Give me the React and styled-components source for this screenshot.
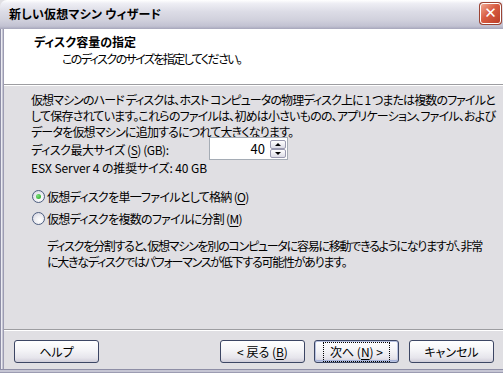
import React from 'react';
import styled, { createGlobalStyle } from 'styled-components';

const GlobalStyle = createGlobalStyle`
  * {
    box-sizing: border-box;
  }
  html, body {
    margin: 0;
    padding: 0;
    background: #e0dfe3;
  }
  body {
    font-family: "Noto Sans CJK JP", "Liberation Sans", sans-serif;
    font-size: 12px;
    color: #000;
    font-feature-settings: "palt";
  }
`;

const Window = styled.div`
  width: 503px;
  height: 373px;
  display: flex;
  flex-direction: column;
  background: #e0dfe3;
  overflow: hidden;
`;

/////////////////// TITLE BAR ///////////////////
const TitleBar = styled.div`
  height: 29px;
  flex-shrink: 0;
  display: flex;
  align-items: center;
  padding: 0 2px 0 9px;
  border-top-left-radius: 7px;
  background: linear-gradient(
    to bottom,
    #ffffff 0%,
    #eeeef4 12%,
    #dcdce6 40%,
    #d0d0dc 70%,
    #c2c2d2 90%,
    #a6a6bb 100%
  );
`;

const Title = styled.div`
  font-weight: bold;
  font-size: 12px;
  line-height: 16px;
  margin-top: -1px;
  letter-spacing: 0.2px;
  white-space: nowrap;
`;

const CloseButton = styled.div`
  margin-left: auto;
  margin-top: -2px;
  width: 21px;
  height: 21px;
  flex-shrink: 0;
  border: 1px solid #ffffff;
  border-radius: 3px;
  background: #d04e34;
  background-image: linear-gradient(135deg, #f0a892 0%, #d85c42 45%, #bc3e28 100%);
  box-shadow: 0 0 0 1px #9c4434;
  display: flex;
  align-items: center;
  justify-content: center;
  color: #ffffff;
  font-family: "DejaVu Sans", sans-serif;
  font-size: 15px;
  font-weight: bold;
  line-height: 1;
`;

/////////////////// FRAME ///////////////////
const Middle = styled.div`
  flex: 1;
  display: flex;
  min-height: 0;
  min-width: 0;
`;

const FrameEdge = styled.div`
  width: 4px;
  flex-shrink: 0;
  background: linear-gradient(
    to right,
    #8e8ea6 0px,
    #8e8ea6 1px,
    #ececf2 1px,
    #ececf2 2px,
    #c6c6d4 2px,
    #c6c6d4 3px,
    #9c9cb2 3px
  );
`;

const Content = styled.div`
  flex: 1;
  min-width: 0;
  display: flex;
  flex-direction: column;
  overflow: hidden;
`;

const BottomFrame = styled.div`
  height: 4px;
  flex-shrink: 0;
  background: linear-gradient(
    to bottom,
    #8e8ea6 0px,
    #8e8ea6 1px,
    #c6c6d4 1px,
    #c6c6d4 3px,
    #9c9cb2 3px
  );
`;

/////////////////// HEADER ///////////////////
const Header = styled.div`
  height: 56px;
  flex-shrink: 0;
  background: #ffffff;
  border-bottom: 1px solid #9d9da1;
  box-shadow: 0 1px 0 #ffffff;
  padding: 5px 0 0 30px;
`;

const HeaderTitle = styled.div`
  font-weight: bold;
  line-height: 16px;
`;

const HeaderSub = styled.div`
  line-height: 16px;
  margin: 1px 0 0 28px;
  letter-spacing: -1.6px;
`;

/////////////////// BODY ///////////////////
const Body = styled.div`
  flex: 1;
  padding: 6px 0 0 27px;
  margin-top: 1px;
  display: flex;
  flex-direction: column;
`;

const Para = styled.div`
  line-height: 16px;
  white-space: nowrap;
  letter-spacing: ${p => p.tight || -0.8}px;
  padding-left: ${p => p.indent || 0}px;
  margin-top: ${p => p.top || 0}px;
`;

const SizeRow = styled.div`
  display: flex;
  align-items: center;
  height: 23px;
  margin-top: -3px;
`;

const SizeLabel = styled.div`
  width: 178px;
  padding-top: 2px;
  letter-spacing: -0.45px;
`;

const SpinBox = styled.div`
  width: 79px;
  height: 23px;
  border: 1px solid #a5acb5;
  background: #ffffff;
  display: flex;
  align-items: center;
  justify-content: flex-end;
  padding-right: 1px;
`;

const SpinValue = styled.div`
  font-size: 13px;
  margin-right: 5px;
  color: #000;
`;

const SpinButtons = styled.div`
  display: flex;
  flex-direction: column;
`;

const SpinButton = styled.div`
  width: 16px;
  height: 9px;
  border: 1px solid #9a9ab0;
  border-radius: 2px;
  background: linear-gradient(to bottom, #ffffff, #dcdce6);
  display: flex;
  align-items: center;
  justify-content: center;
`;

const Arrow = styled.div`
  width: 0;
  height: 0;
  border-left: 3px solid transparent;
  border-right: 3px solid transparent;
  ${p => (p.up ? 'border-bottom: 3px solid #000;' : 'border-top: 3px solid #000;')}
`;

const RadioRow = styled.div`
  display: flex;
  align-items: center;
  height: 22px;
  padding-left: 1px;
  white-space: nowrap;
  letter-spacing: -0.7px;
  margin-top: ${p => p.top || 0}px;
`;

const RadioCircle = styled.div`
  width: 13px;
  height: 13px;
  flex-shrink: 0;
  border-radius: 50%;
  border: 1px solid #4d5e80;
  background: radial-gradient(circle at 60% 65%, #ffffff 0%, #f0f0f4 40%, #cfcfdc 100%);
  display: flex;
  align-items: center;
  justify-content: center;
  margin-right: 2px;
`;

const RadioDot = styled.div`
  width: 5px;
  height: 5px;
  border-radius: 50%;
  background: radial-gradient(circle at 35% 35%, #7be07b, #21a121);
`;

const U = styled.span`
  text-decoration: underline;
  text-underline-offset: 2px;
`;

/////////////////// FOOTER ///////////////////
const Footer = styled.div`
  flex-shrink: 0;
  border-top: 1px solid #9d9da1;
  box-shadow: inset 0 1px 0 #ffffff;
  padding: 10px 9px 6px 10px;
  display: flex;
  align-items: center;
`;

const Spacer = styled.div`
  flex: 1;
`;

const Button = styled.div`
  width: 85px;
  height: 23px;
  flex-shrink: 0;
  margin-left: ${p => p.gap || 0}px;
  border: 1px solid #3c4664;
  border-radius: 3px;
  background: linear-gradient(to bottom, #ffffff 0%, #f4f4f7 45%, #e6e5ec 80%, #cfcdd9 100%);
  box-shadow: ${p => (p.primary ? 'inset 0 0 0 1px #b8c2e0, inset 0 -1px 0 1px #a8b4dc' : 'none')};
  display: flex;
  align-items: center;
  justify-content: center;
  line-height: 14px;
  white-space: nowrap;
`;

const FocusLabel = styled.span`
  outline: 1px dotted #000;
  outline-offset: 2px;
  padding: 0 4px;
`;

export default function App() {
  return (
    <Window>
      <GlobalStyle />
      <TitleBar>
        <Title>新しい仮想マシン ウィザード</Title>
        <CloseButton>✕</CloseButton>
      </TitleBar>
      <Middle>
        <FrameEdge />
        <Content>
          <Header>
            <HeaderTitle>ディスク容量の指定</HeaderTitle>
            <HeaderSub>このディスクのサイズを指定してください。</HeaderSub>
          </Header>
          <Body>
            <Para tight={-0.9}>仮想マシンのハード ディスクは、ホスト コンピュータの物理ディスク上に 1 つまたは複数のファイルと</Para>
            <Para>して保存されています。これらのファイルは、初めは小さいものの、アプリケーション、ファイル、および</Para>
            <Para>データを仮想マシンに追加するにつれて大きくなります。</Para>
            <SizeRow>
              <SizeLabel>
                ディスク最大サイズ (<U>S</U>) (GB):
              </SizeLabel>
              <SpinBox>
                <SpinValue>40</SpinValue>
                <SpinButtons>
                  <SpinButton>
                    <Arrow up />
                  </SpinButton>
                  <SpinButton>
                    <Arrow />
                  </SpinButton>
                </SpinButtons>
              </SpinBox>
            </SizeRow>
            <Para tight={-0.1}>ESX Server 4 の推奨サイズ: 40 GB</Para>
            <RadioRow top={9}>
              <RadioCircle>
                <RadioDot />
              </RadioCircle>
              仮想ディスクを単一ファイルとして格納 (<U>O</U>)
            </RadioRow>
            <RadioRow>
              <RadioCircle />
              仮想ディスクを複数のファイルに分割 (<U>M</U>)
            </RadioRow>
            <Para indent={16} top={9} tight={-1.25}>
              ディスクを分割すると、仮想マシンを別のコンピュータに容易に移動できるようになりますが、非常
            </Para>
            <Para indent={16} tight={-1.25}>
              に大きなディスクではパフォーマンスが低下する可能性があります。
            </Para>
          </Body>
          <Footer>
            <Button>ヘルプ</Button>
            <Spacer />
            <Button>
              &lt; 戻る (<U>B</U>)
            </Button>
            <Button gap={9} primary>
              <FocusLabel>
                次へ (<U>N</U>) &gt;
              </FocusLabel>
            </Button>
            <Button gap={10}>キャンセル</Button>
          </Footer>
        </Content>
      </Middle>
      <BottomFrame />
    </Window>
  );
}
